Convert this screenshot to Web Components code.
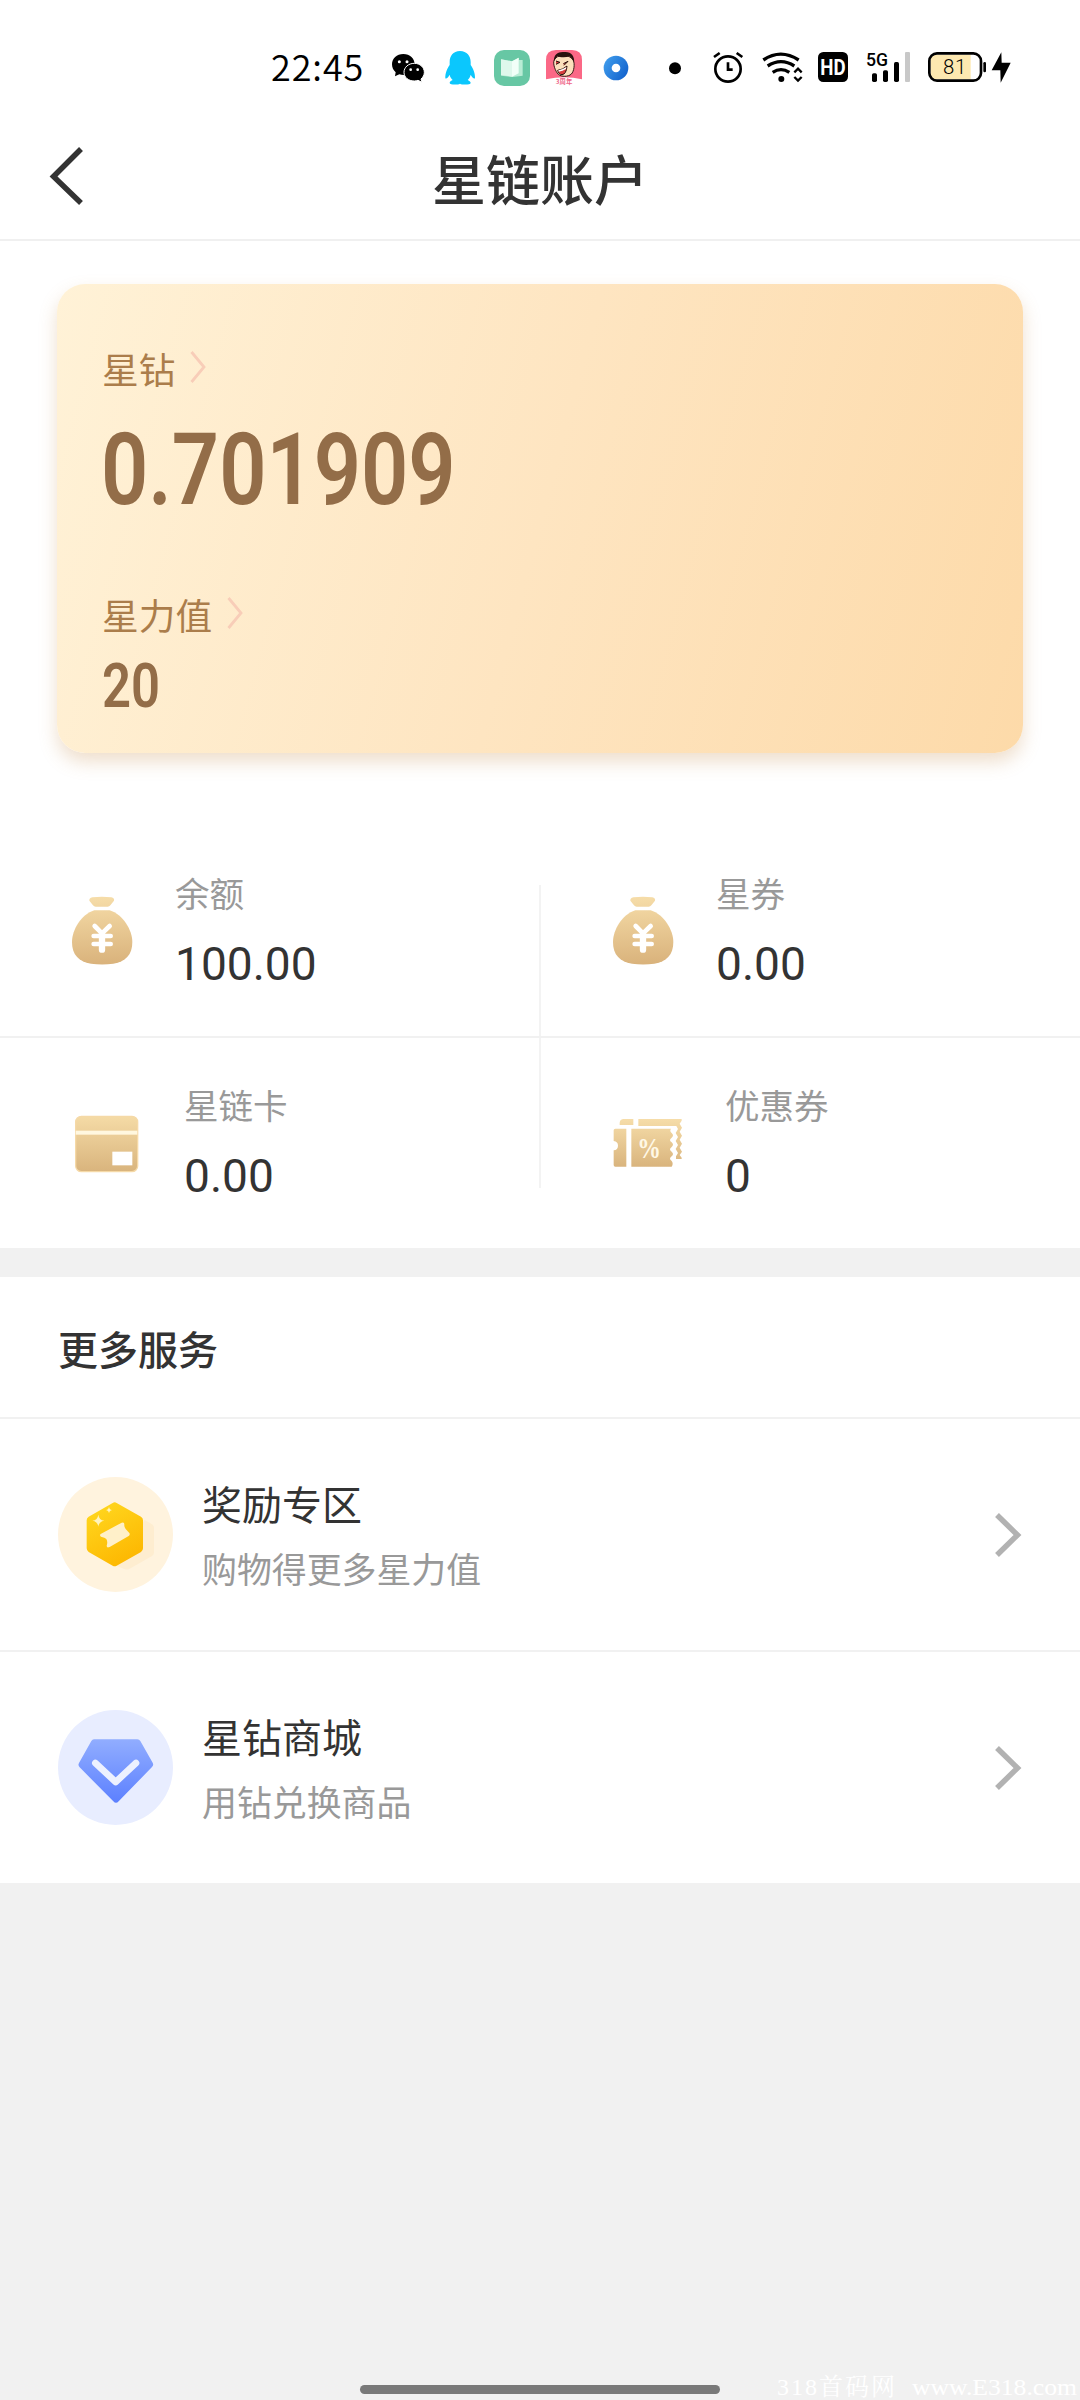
<!DOCTYPE html>
<html lang="zh-CN">
<head>
<meta charset="utf-8">
<title>星链账户</title>
<style>
  html, body { margin: 0; background: #f1f1f1; }
  body { width: 1080px; height: 2400px; overflow: hidden; font-family: "Noto Sans CJK SC", sans-serif; color: #333; }
</style>
</head>
<body>
<account-app></account-app>
<script>
const define = (name, html) => customElements.define(name, class extends HTMLElement {
  constructor() {
    super();
    const t = document.createElement('template');
    t.innerHTML = html;
    this.attachShadow({ mode: 'open' }).appendChild(t.content.cloneNode(true));
  }
});

define('status-bar', `
<style>
  :host { display: flex; height: 110px; padding: 30px 0 0 271px; box-sizing: border-box; background: #fff; color: #000; }
  .time { width: 111px; height: 80px; font-size: 36px; line-height: 71px; letter-spacing: .9px; font-weight: 350; }
  svg { display: block; height: 80px; flex: none; }
</style>
<div class="time">22:45</div>
<svg width="54" viewBox="396 0 162 240">
  <path d="M460 72c-20 0-34 13-34 31 0 10 4 18 11 24l-2 12 13-6c4 1 8 2 13 2 20 0 33-14 33-32s-14-31-34-31z"/>
  <path d="M493 100c-18 0-31 12-31 27s13 26 31 26c4 0 8-1 11-2l12 6-3-10c6-5 10-12 10-20 0-15-13-27-30-27z" stroke="#fff" stroke-width="3"/>
  <g fill="#fff"><circle cx="448" cy="95" r="4.500"/><circle cx="471" cy="95" r="4.500"/><circle cx="482" cy="119" r="4"/><circle cx="503" cy="119" r="4"/></g>
</svg>
<svg width="50" viewBox="558 0 150 240">
  <path fill="#0bc7fd" d="M630 63c-21 0-31 15-31 33v9c-7 10-14 25-13 40 3 3 9-3 13-11 1 7 5 12 9 16-7 3-9 6-9 9 0 6 25 6 31 2 6 4 32 4 32-2 0-3-3-6-9-9 4-4 8-10 9-16 4 8 10 14 13 11 1-15-6-30-13-40v-9c0-18-11-33-32-33z"/>
</svg>
<svg width="54" viewBox="708 0 162 240">
  <rect x="732" y="60" width="108" height="108" rx="30" fill="#67c7a4"/>
  <path d="M753 88l33 6 20-11v7h12v47l-30 4-35-4z" fill="#b9ecd5"/>
  <path d="M753 88l33 6v46l-33-5z" fill="#dff8ec"/><path d="M786 94l20-11v47l-20 10z" fill="#f2fff8"/>
</svg>
<svg width="50" viewBox="870 0 150 240">
  <path d="M888 148V90q0-30 30-30h48q30 0 30 30v58q-52-13-108 0z" fill="#fb6886"/>
  <path d="M913 89c5-14 45-20 57 2 5 11 2 34-6 41-9 9-30 9-39 1-9-9-18-33-12-44z" fill="#fce0bd" stroke="#351c17" stroke-width="3"/>
  <path d="M912 94c-2-22 14-30 31-28 20-2 32 13 29 31-5-7-6-13-13-18-14 5-31 3-37-1z" fill="#29120e"/>
  <path d="M918 93l12 4-12 6M940 101l14-7-12 12M923 121q16-2 28-13-2 25-15 26-10 0-13-13z" fill="#d93e3e" stroke="#29120e" stroke-width="3"/>
  <path d="M925 121q13-2 24-10l-1 6q-10 7-22 8z" fill="#fff"/>
  <text x="917" y="162" font-size="19" font-weight="700" fill="#ee6689" textLength="50" font-family="Noto Sans CJK SC, sans-serif">3周年</text>
</svg>
<svg width="50" viewBox="1020 0 150 240">
  <defs><linearGradient id="r" x2="1" y2=".6"><stop stop-color="#43a1ee"/><stop offset="1" stop-color="#1566cf"/></linearGradient></defs>
  <circle cx="1098" cy="114" r="37" fill="url(#r)"/><circle cx="1098" cy="114" r="13" fill="#fff"/>
</svg>
<svg width="60" viewBox="0 0 180 240"><circle cx="105" cy="115" r="18"/></svg>
<svg width="50" viewBox="180 0 150 240" fill="none" stroke="#000" stroke-width="8">
  <circle cx="264" cy="117" r="38"/><path d="M264 97v22h14M222 81l17-12M290 69l17 12"/>
</svg>
<svg width="60" viewBox="330 0 180 240" fill="none" stroke="#000" stroke-width="10">
  <path d="M370 90q52-35 106 0M383 108q40-26 80 0M398 127q25-16 50 0"/>
  <circle cx="424" cy="147" r="9" fill="#000" stroke="none"/>
  <path stroke-width="7" d="M463 127l11-11 11 11M463 141l11 11 11-11"/>
</svg>
<svg width="50" viewBox="510 0 150 240">
  <rect x="534" y="66" width="90" height="90" rx="16"/>
  <text x="541" y="134" font-size="65" font-weight="700" fill="#fff" textLength="76" lengthAdjust="spacingAndGlyphs" font-family="Roboto, sans-serif">HD</text>
</svg>
<svg width="60" viewBox="660 0 180 240">
  <text x="678" y="109" font-size="57" font-weight="500" textLength="66" lengthAdjust="spacingAndGlyphs" font-family="Roboto, sans-serif">5G</text>
  <rect x="696" y="130" width="15" height="26" rx="5"/><rect x="729" y="121" width="15" height="35" rx="5"/>
  <rect x="762" y="96" width="15" height="60" rx="5"/><rect x="795" y="66" width="15" height="90" rx="3" fill="#c8c8c8"/>
</svg>
<svg width="100" viewBox="840 0 300 240">
  <path d="M886 74h106v74H886q-14 0-14-14V88q0-14 14-14z" fill="#fde8b0"/>
  <rect x="868" y="70" width="155" height="82" rx="23" fill="none" stroke="#000" stroke-width="8"/>
  <rect x="1030" y="96" width="8" height="31" rx="4"/>
  <text x="909" y="131" font-size="61" font-weight="300" textLength="70" font-family="Roboto, sans-serif">81</text>
  <path d="M1084 67l-29 54h26l1 37 30-60h-27z"/>
</svg>
`);

define('nav-header', `
<style>
  :host { display: grid; grid-template-columns: 132px 1fr 132px; align-items: center; height: 131px; box-sizing: border-box; border-bottom: 2px solid #f0f0f0; background: #fff; }
  svg { display: block; margin-left: 44px; margin-top: 2px; }
  h1 { margin: 7px 0 0; text-align: center; font-size: 54px; line-height: 80px; font-weight: 500; color: #333; }
</style>
<svg width="44" height="64" viewBox="44 144 44 64" fill="none" stroke="#333" stroke-width="5.500"><path d="M81 149 53.500 176.500 81 203"/></svg>
<h1><slot></slot></h1>
`);

define('asset-card', `
<style>
  :host { display: flex; flex-direction: column; margin: 43px 57px 0; height: 469px; border-radius: 28px; box-sizing: border-box; padding: 60px 45px 0;
    background: linear-gradient(105deg, #fff2d7 0%, #fee5c1 50%, #fddaa9 100%);
    box-shadow: 0 9px 18px rgba(196,140,75,.28); color: #936d48; }
  .label { display: flex; align-items: center; height: 48px; font-size: 36.700px; line-height: 48px; color: #ab7d4b; gap: 15px; }
  .label svg { margin-top: -3px; }
  .num { transform-origin: 0 50%; transform: scaleX(.828); font: 600 100px/100px Roboto, sans-serif; white-space: nowrap; }
  .big { margin-top: 28px; margin-left: -1px; }
  .second { margin-top: 70px; }
  .small { font-size: 60.500px; line-height: 60px; margin-top: 19px; transform: scaleX(.84); }
</style>
<div class="label"><slot name="l1"></slot><svg width="16" height="34" viewBox="0 0 16 34" fill="none" stroke="#f8cdb8" stroke-width="2.800"><path d="M1.500 2 14 17 1.500 32"/></svg></div>
<div class="num big"><slot name="v1"></slot></div>
<div class="label second"><slot name="l2"></slot><svg width="16" height="34" viewBox="0 0 16 34" fill="none" stroke="#f8cdb8" stroke-width="2.800"><path d="M1.500 2 14 17 1.500 32"/></svg></div>
<div class="num small"><slot name="v2"></slot></div>
`);

define('icon-bag', `
<style>:host { display: block; width: 105px; } svg { display: block; }</style>
<svg width="65" height="72" viewBox="90 136 195 216">
  <defs><linearGradient id="g" gradientUnits="userSpaceOnUse" x1="180" y1="140" x2="190" y2="346"><stop stop-color="#f6dda9"/><stop offset="1" stop-color="#d9b27b"/></linearGradient></defs>
  <g fill="url(#g)"><path d="M148 153q-1-7 9-10 29-4 57 0 10 3 8 10l-11 14q-3 4-8 4h-36q-5 0-8-4z"/>
  <path d="M163 182h46c40 13 68 59 68 95 0 38-20 59-57 65-22 3-45 3-67 0-37-6-57-27-57-65 0-36 27-82 67-95z"/></g>
  <g fill="none" stroke="#fff" stroke-width="14" stroke-linecap="round" stroke-linejoin="round"><path d="M164 229l22 22 23-22M161 259h51M161 283h51"/><path stroke-width="19" d="M186 254v46"/></g>
</svg>`);

define('icon-card', `
<style>:host { display: block; width: 110px; } svg { display: block; }</style>
<svg width="66" height="60" viewBox="102 190 198 180">
  <defs><linearGradient id="g" x2="0" y2="1"><stop stop-color="#f5dba6"/><stop offset="1" stop-color="#d9b47d"/></linearGradient></defs>
  <rect x="107" y="197" width="186" height="166" rx="17" fill="url(#g)" stroke="#f5d9a7" stroke-width="4"/>
  <rect x="107" y="240" width="185" height="12" fill="#fff7df"/><rect x="217" y="303" width="60" height="41" fill="#fff"/>
</svg>`);

define('icon-ticket', `
<style>:host { display: block; width: 112px; } svg { display: block; }</style>
<svg width="70" height="50" viewBox="158 804 210 150">
  <defs><linearGradient id="g" gradientUnits="userSpaceOnUse" x1="0" y1="807" x2="0" y2="950"><stop stop-color="#f6dda9"/><stop offset="1" stop-color="#d9b47d"/></linearGradient></defs>
  <g fill="url(#g)">
  <path d="M178 825v-7q1-11 12-11h29v18zM234 807h130v5l-6 9 7 12-7 12 7 12-7 12 7 12-7 12 7 12-7 10 6 8v4h-17v-8l6-10-7-12 7-12-7-12 7-12-7-12 7-12-5-9H234z"/>
  <path d="M165 836h33v114h-33q-5 0-5-5v-44q13-2 13-14t-13-14v-32q0-5 5-5zM213 836h119q-5 7 2 13 8 7 0 14-10 7 0 14 8 7 0 14-10 7 0 14 8 7 0 14-10 7 0 14 6 8 0 17H213z"/></g>
  <text x="231" y="923" font-size="86" font-weight="700" fill="#fff8e6" textLength="71" lengthAdjust="spacingAndGlyphs" font-family="Liberation Serif, serif">%</text>
</svg>`);

define('stat-cell', `
<style>
  :host { display: flex; align-items: flex-start; height: var(--h, 212px); box-sizing: border-box; padding-left: var(--pl, 71px); }
  .icon { margin-top: var(--it, 71px); }
  .label { font-size: 34.560px; line-height: 44px; color: #999; margin-top: var(--tt, 46px); }
  .value { font: 400 46.080px/54px Roboto, sans-serif; color: #333; margin-top: 23px; }
</style>
<div class="icon"><slot name="icon"></slot></div>
<div><div class="label"><slot name="label"></slot></div><div class="value"><slot></slot></div></div>
`);

define('stat-grid', `
<style>
  :host { display: grid; grid-template: 212px 2px 210px / 539px 2px 539px; margin-top: 71px; background: #fff; }
  .v { background: #f3f3f3; } .v.a { margin-top: 61px; } .v.b { margin-bottom: 60px; }
  .h { grid-column: 1 / 4; background: #f1f1f1; }
</style>
<slot name="a"></slot><div class="v a"></div><slot name="b"></slot>
<div class="h"></div>
<slot name="c"></slot><div class="v b"></div><slot name="d"></slot>
`);

define('section-title', `
<style>
  :host { display: block; margin-top: 29px; height: 142px; box-sizing: border-box; border-bottom: 2px solid #f1f1f1; background: #fff; padding-left: 58px; }
  h2 { margin: 0; font-size: 40px; line-height: 142px; font-weight: 500; color: #333; }
</style>
<h2><slot></slot></h2>`);

define('icon-reward', `
<style>:host, svg { display: block; }</style>
<svg width="115" height="115" viewBox="85 561 345 345">
  <defs><linearGradient id="y" x1=".2" x2=".7" y2="1"><stop stop-color="#ffd71f"/><stop offset="1" stop-color="#fdb600"/></linearGradient></defs>
  <circle cx="257.500" cy="733.500" r="172.500" fill="#fff3de"/>
  <path d="M345 690l22 13q6 4 6 10v75q0 6-6 10l-67 38q-8 5-16 1l-28-11z" fill="#feedd0"/>
  <path d="M249 639q6-4 12 0l73 41q6 4 6 11v84q0 7-6 11l-73 41q-6 4-12 0l-72-41q-6-4-6-11v-84q0-7 6-11z" fill="url(#y)"/>
  <path d="M213 732L276 698Q284 695 284 703 283 712 288 717L299 729Q302 734 297 738L240 771Q231 775 231 767 235 756 230 747 226 743 214 740 209 736 213 732z" fill="#fff0c9"/>
  <path d="M206 674q2 16 18 18-16 2-18 18-2-16-18-18 16-2 18-18zM238 650q1 9 9 10-8 1-9 9-1-8-9-9 8-1 9-10z" fill="#fff3bd"/>
</svg>`);

define('icon-diamond', `
<style>:host, svg { display: block; }</style>
<svg width="115" height="115" viewBox="85 210 345 345">
  <defs><linearGradient id="b" x2="0" y2="1"><stop stop-color="#91adff"/><stop offset="1" stop-color="#5c80ff"/></linearGradient></defs>
  <circle cx="257.500" cy="382.500" r="172.500" fill="#e8edff"/>
  <path d="M193 298h130q6 0 9 5l37 65q4 7-2 13L267 484q-8 9-16 0L150 382q-6-6-2-13l37-66q3-5 8-5z" fill="url(#b)"/>
  <path d="M197 369l61 57 61-57" fill="none" stroke="#edf1ff" stroke-width="20" stroke-linecap="round" stroke-linejoin="round"/>
</svg>`);

define('service-row', `
<style>
  :host { display: flex; align-items: center; height: var(--h, 233px); box-sizing: border-box; border-bottom: var(--line, 2px) solid #f1f1f1; padding: 0 57px 0 58px; background: #fff; }
  .text { flex: 1; margin: -1px 0 0 29px; }
  .t { font-size: 40px; line-height: 52px; color: #333; }
  .s { font-size: 34.900px; line-height: 46px; color: #999; margin-top: 16px; }
</style>
<slot name="icon"></slot>
<div class="text"><div class="t"><slot></slot></div><div class="s"><slot name="sub"></slot></div></div>
<svg width="30" height="48" viewBox="0 0 30 48" fill="none" stroke="#b2b2b2" stroke-width="5.500"><path d="M4 4l20.500 20L4 44"/></svg>
`);

define('home-indicator', `
<style>
  :host { display: flow-root; position: absolute; left: 0; top: 2368px; width: 1080px; height: 32px; }
  .bar { width: 360px; height: 9px; border-radius: 5px; background: #797979; margin: 17px auto 0; }
  svg { position: absolute; left: 774px; top: 0; }
</style>
<div class="bar"></div>
<svg width="306" height="32" fill="#fff" font-size="24" font-family="Liberation Serif, Noto Serif CJK SC, Noto Sans CJK SC, serif">
  <text x="3" y="27" textLength="118">318首码网</text>
  <text x="138" y="27" textLength="165" lengthAdjust="spacingAndGlyphs">www.E318.com</text>
</svg>
`);

define('account-app', `
<style>
  :host { display: block; width: 1080px; height: 2400px; position: relative; overflow: hidden; background: #f1f1f1; }
  .top { background: #fff; display: flow-root; }
  .r2 { --h: 210px; --tt: 44px; --it: 76px; }
</style>
<div class="top">
<status-bar></status-bar>
<nav-header>星链账户</nav-header>
<asset-card><span slot="l1">星钻</span><span slot="v1">0.701909</span><span slot="l2">星力值</span><span slot="v2">20</span></asset-card>
<stat-grid>
  <stat-cell slot="a" style="--pl:70px"><icon-bag slot="icon"></icon-bag><span slot="label">余额</span>100.00</stat-cell>
  <stat-cell slot="b" style="--pl:70px"><icon-bag slot="icon"></icon-bag><span slot="label">星券</span>0.00</stat-cell>
  <stat-cell slot="c" class="r2" style="--pl:74px"><icon-card slot="icon"></icon-card><span slot="label">星链卡</span>0.00</stat-cell>
  <stat-cell slot="d" class="r2" style="--pl:72px;--it:80px"><icon-ticket slot="icon"></icon-ticket><span slot="label">优惠券</span>0</stat-cell>
</stat-grid>
</div>
<section-title>更多服务</section-title>
<service-row><icon-reward slot="icon"></icon-reward>奖励专区<span slot="sub">购物得更多星力值</span></service-row>
<service-row style="--h:231px;--line:0px"><icon-diamond slot="icon"></icon-diamond>星钻商城<span slot="sub">用钻兑换商品</span></service-row>
<home-indicator></home-indicator>
`);
</script>
</body>
</html>
